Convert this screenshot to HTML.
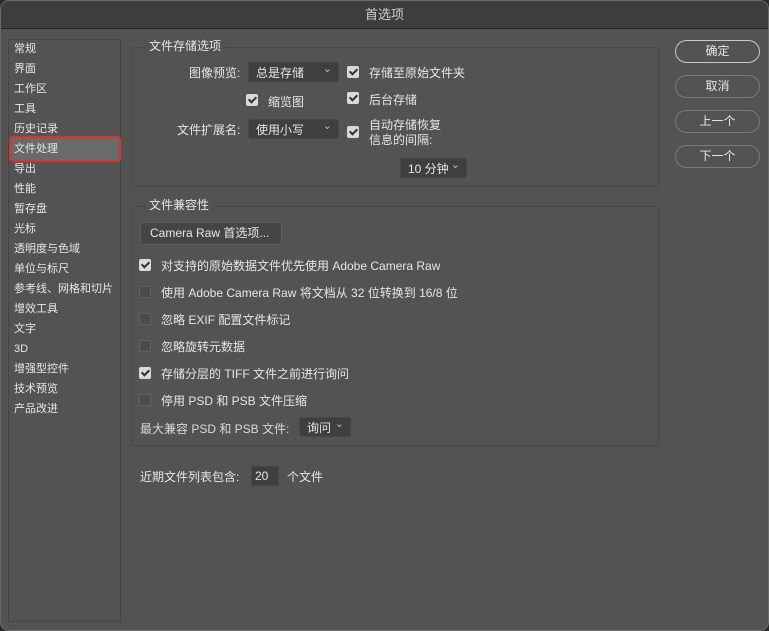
<!DOCTYPE html><html><head><meta charset="utf-8"><style>
*{box-sizing:border-box;margin:0;padding:0}
body{width:769px;height:631px;background:#2a2a2a;font-family:"Liberation Sans","Noto Sans CJK SC",sans-serif;font-size:12px;color:#e6e6e6;position:relative;overflow:hidden}
.win{position:absolute;left:0;top:0;width:769px;height:631px;background:#535353;border-radius:9px;border:1px solid #6a6a6a;overflow:hidden}
.title{position:absolute;left:0;top:0;width:100%;height:28px;background:#3d3d3d;border-bottom:1px solid #222;text-align:center;line-height:28px;font-size:13px;color:#cfcfcf}
.a{position:absolute;white-space:nowrap}
.side{position:absolute;left:7px;top:38px;width:113px;height:583px;border:1px solid #454545}
.side div{position:absolute;left:6px;height:20px;line-height:20px;white-space:nowrap;font-size:11px}
.sel{position:absolute;left:8px;top:135px;width:112px;height:26px;background:#6a6a6a;border:2px solid #e0302a;border-radius:4px}
.grp{position:absolute;border:1px solid #464646;border-radius:3px}
.gt{position:absolute;background:#535353;padding:0 4px;line-height:14px}
.dd{position:absolute;background:#3f3f3f;border-radius:3px;height:20px;line-height:20px;padding-left:7px;border:1px solid #474747}
.dd:after{content:"⌄";position:absolute;right:6px;top:-4px;font-size:11px;color:#bbb}
.cb{position:absolute;width:12px;height:12px;border-radius:2px;background:#d9d9d9}
.cb:after{content:"";position:absolute;left:4px;top:1px;width:3px;height:6px;border:solid #333;border-width:0 2px 2px 0;transform:rotate(45deg)}
.uc{position:absolute;width:12px;height:12px;border-radius:2px;background:#4b4b4b;border:1px solid #626262}
.btn{position:absolute;left:674px;width:85px;height:23px;border:1px solid #7a7a7a;border-radius:12px;text-align:center;line-height:21px}
</style></head><body><div class="win">
<div class="title">首选项</div>
<div class="side"></div>
<div class="sel"></div>
<div class="side" style="border:none">
<div style="top:0px">常规</div><div style="top:20px">界面</div><div style="top:40px">工作区</div><div style="top:60px">工具</div><div style="top:80px">历史记录</div>
<div style="top:100px">文件处理</div><div style="top:120px">导出</div><div style="top:140px">性能</div><div style="top:160px">暂存盘</div><div style="top:180px">光标</div><div style="top:200px">透明度与色域</div><div style="top:220px">单位与标尺</div><div style="top:240px">参考线、网格和切片</div><div style="top:260px">增效工具</div><div style="top:280px">文字</div><div style="top:300px">3D</div><div style="top:320px">增强型控件</div><div style="top:340px">技术预览</div><div style="top:360px">产品改进</div>
</div>

<div class="grp" style="left:130px;top:46px;width:528px;height:140px"></div>
<div class="gt" style="left:144px;top:38px">文件存储选项</div>
<div class="a" style="left:188px;top:63px">图像预览:</div>
<div class="dd" style="left:247px;top:61px;width:91px">总是存储</div>
<div class="cb" style="left:346px;top:65px"></div><div class="a" style="left:368px;top:63px">存储至原始文件夹</div>
<div class="cb" style="left:245px;top:93px"></div><div class="a" style="left:267px;top:92px">缩览图</div>
<div class="cb" style="left:346px;top:91px"></div><div class="a" style="left:368px;top:90px">后台存储</div>
<div class="a" style="left:176px;top:120px">文件扩展名:</div>
<div class="dd" style="left:247px;top:118px;width:91px">使用小写</div>
<div class="cb" style="left:346px;top:125px"></div>
<div class="a" style="left:368px;top:117px;line-height:15px">自动存储恢复<br>信息的间隔:</div>
<div class="dd" style="left:399px;top:157px;width:67px">10 分钟</div>

<div class="grp" style="left:130px;top:205px;width:528px;height:240px"></div>
<div class="gt" style="left:144px;top:197px">文件兼容性</div>
<div class="a" style="left:139px;top:221px;width:142px;height:23px;background:#454545;border:1px solid #5c5c5c;border-radius:2px;line-height:21px;padding-left:9px">Camera Raw 首选项...</div>
<div class="cb" style="left:138px;top:258px"></div><div class="a" style="left:160px;top:256px">对支持的原始数据文件优先使用 Adobe Camera Raw</div>
<div class="uc" style="left:138px;top:285px"></div><div class="a" style="left:160px;top:283px">使用 Adobe Camera Raw 将文档从 32 位转换到 16/8 位</div>
<div class="uc" style="left:138px;top:312px"></div><div class="a" style="left:160px;top:310px">忽略 EXIF 配置文件标记</div>
<div class="uc" style="left:138px;top:339px"></div><div class="a" style="left:160px;top:337px">忽略旋转元数据</div>
<div class="cb" style="left:138px;top:366px"></div><div class="a" style="left:160px;top:364px">存储分层的 TIFF 文件之前进行询问</div>
<div class="uc" style="left:138px;top:393px"></div><div class="a" style="left:160px;top:391px">停用 PSD 和 PSB 文件压缩</div>
<div class="a" style="left:139px;top:419px;color:#d8d8d8">最大兼容 PSD 和 PSB 文件:</div>
<div class="dd" style="left:298px;top:416px;width:52px">询问</div>
<div class="a" style="left:139px;top:467px">近期文件列表包含:</div>
<div class="a" style="left:250px;top:465px;width:28px;height:20px;background:#3f3f3f;border:1px solid #474747;line-height:18px;padding-left:3px">20</div>
<div class="a" style="left:286px;top:467px">个文件</div>

<div class="btn" style="top:39px;border-color:#c8c8c8">确定</div>
<div class="btn" style="top:74px">取消</div>
<div class="btn" style="top:109px">上一个</div>
<div class="btn" style="top:144px">下一个</div>
</div></body></html>
